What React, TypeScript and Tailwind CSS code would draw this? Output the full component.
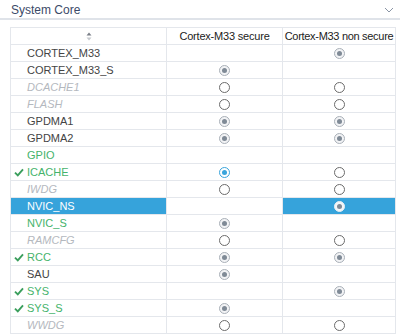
import React from "react";

type Radio = "none" | "empty" | "on" | "blue";
type Kind = "normal" | "green" | "disabled";

interface Row {
  name: string;
  kind: Kind;
  check?: boolean;
  selected?: boolean;
  s: Radio;
  ns: Radio;
}

const rows: Row[] = [
  { name: "CORTEX_M33", kind: "normal", s: "none", ns: "on" },
  { name: "CORTEX_M33_S", kind: "normal", s: "on", ns: "none" },
  { name: "DCACHE1", kind: "disabled", s: "empty", ns: "empty" },
  { name: "FLASH", kind: "disabled", s: "empty", ns: "empty" },
  { name: "GPDMA1", kind: "normal", s: "on", ns: "on" },
  { name: "GPDMA2", kind: "normal", s: "on", ns: "on" },
  { name: "GPIO", kind: "green", s: "none", ns: "none" },
  { name: "ICACHE", kind: "green", check: true, s: "blue", ns: "empty" },
  { name: "IWDG", kind: "disabled", s: "empty", ns: "empty" },
  { name: "NVIC_NS", kind: "normal", selected: true, s: "none", ns: "on" },
  { name: "NVIC_S", kind: "green", s: "on", ns: "none" },
  { name: "RAMCFG", kind: "disabled", s: "empty", ns: "empty" },
  { name: "RCC", kind: "green", check: true, s: "on", ns: "on" },
  { name: "SAU", kind: "normal", s: "on", ns: "none" },
  { name: "SYS", kind: "green", check: true, s: "none", ns: "on" },
  { name: "SYS_S", kind: "green", check: true, s: "on", ns: "none" },
  { name: "WWDG", kind: "disabled", s: "empty", ns: "empty" },
];

const RadioDot: React.FC<{ state: Radio; onBlue?: boolean }> = ({ state, onBlue }) => {
  if (state === "none") return null;
  if (state === "empty")
    return <span className="block w-[11px] h-[11px] rounded-full border border-[#6b6b6b] bg-white" />;
  if (state === "blue")
    return (
      <span className="flex items-center justify-center w-[11px] h-[11px] rounded-full border border-[#3aa5dc] bg-white">
        <span className="block w-[5px] h-[5px] rounded-full bg-[#3aa5dc]" />
      </span>
    );
  return (
    <span
      className={`flex items-center justify-center w-[11px] h-[11px] rounded-full border ${
        onBlue ? "border-[#e8eef3] bg-[#f4f6f8]" : "border-[#a9b0b8] bg-[#f2f3f5]"
      }`}
    >
      <span className="block w-[5px] h-[5px] rounded-full bg-[#7f8a96]" />
    </span>
  );
};

const Check = () => (
  <svg width="10" height="9" viewBox="0 0 10 9" className="absolute left-[3px] top-[4px]">
    <path d="M1 4.6 L3.8 7.4 L9 1.4" fill="none" stroke="#3a9e5c" strokeWidth="1.9" />
  </svg>
);

export default function App() {
  const nameColor = (k: Kind, sel?: boolean) =>
    sel ? "text-white" : k === "green" ? "text-[#45b36b]" : k === "disabled" ? "text-[#b4b8be] italic" : "text-[#444]";

  return (
    <div className="w-[400px] h-[334px] bg-white overflow-hidden" style={{ fontFamily: '"Liberation Sans", Arial, sans-serif' }}>
      <div className="flex items-center justify-between h-[20px] pl-[11px] pr-[6px] border-b-2 border-[#dfe3e9]">
        <span className="text-[12px] text-[#3b4a69] leading-none pt-[2px]">System Core</span>
        <svg width="10" height="6" viewBox="0 0 10 6" className="mt-[1px]">
          <path d="M1 1 L5 5 L9 1" fill="none" stroke="#8a95a5" strokeWidth="1" />
        </svg>
      </div>
      <div className="ml-[10px] mt-[7px] w-[386px] border-l border-t border-[#e4e7ec] grid grid-cols-[156px_116px_113px] text-[11px] leading-none">
        <div className="h-[17px] border-r border-b border-[#e4e7ec] flex items-center justify-center">
          <svg width="6" height="9" viewBox="0 0 6 9">
            <path d="M3 0.5 L5.5 3.5 L0.5 3.5 Z" fill="#7a7f87" />
            <path d="M3 8.5 L5.5 5.5 L0.5 5.5 Z" fill="#c5c9ce" />
          </svg>
        </div>
        <div className="h-[17px] border-r border-b border-[#e4e7ec] flex items-center justify-center text-[#222] whitespace-nowrap tracking-[-0.2px]">
          Cortex-M33 secure
        </div>
        <div className="h-[17px] border-r border-b border-[#e4e7ec] flex items-center justify-center text-[#222] whitespace-nowrap tracking-[-0.3px]">
          Cortex-M33 non secure
        </div>
        {rows.map((r) => (
          <React.Fragment key={r.name}>
            <div
              className={`relative h-[17px] border-r border-b border-[#e4e7ec] flex items-center pl-[16px] ${
                r.selected ? "bg-[#36a3db]" : ""
              } ${nameColor(r.kind, r.selected)}`}
            >
              {r.check && <Check />}
              {r.name}
            </div>
            <div className="h-[17px] border-r border-b border-[#e4e7ec] flex items-center justify-center">
              <RadioDot state={r.s} />
            </div>
            <div
              className={`h-[17px] border-r border-b border-[#e4e7ec] flex items-center justify-center ${
                r.selected ? "bg-[#36a3db]" : ""
              }`}
            >
              <RadioDot state={r.ns} onBlue={r.selected} />
            </div>
          </React.Fragment>
        ))}
      </div>
    </div>
  );
}
